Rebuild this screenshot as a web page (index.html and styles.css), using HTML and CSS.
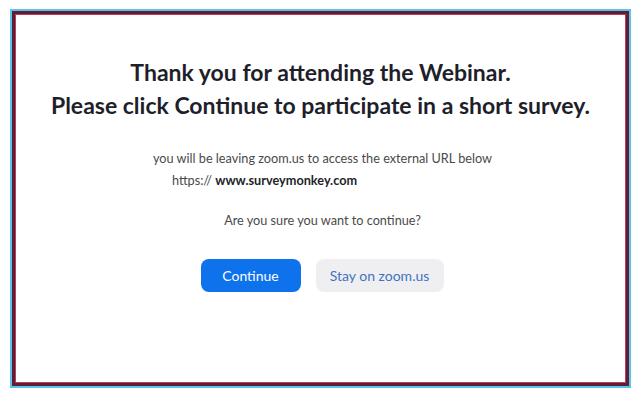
FILE: index.html
```html
<!DOCTYPE html>
<html>
<head>
<meta charset="utf-8">
<link rel="stylesheet" href="styles.css">
</head>
<body>
<div class="frame">
  <div class="dialog">
    <h1 class="title">Thank you for attending the Webinar.<br>Please click Continue to participate in a short survey.</h1>
    <div class="info">
      <p class="leave">you will be leaving zoom.us to access the external URL below</p>
      <p class="url">https:// <b>www.surveymonkey.com</b></p>
    </div>
    <p class="question">Are you sure you want to continue?</p>
    <div class="actions">
      <button class="btn primary">Continue</button>
      <button class="btn secondary">Stay on zoom.us</button>
    </div>
  </div>
</div>
</body>
</html>
```
FILE: styles.css
```css
html, body {
  margin: 0;
  padding: 0;
  background: #ffffff;
}
body {
  font-family: Lato, "Open Sans", sans-serif;
  padding: 9px 0 0 10px;
}
.frame {
  width: 621px;
  height: 379px;
  box-sizing: border-box;
  border: 2px solid #5cc4ec;
}
.dialog {
  height: 100%;
  box-sizing: border-box;
  border: 3px solid #5a2035;
  box-shadow: inset 0 0 0 1px #c23a55;
  display: flex;
  flex-direction: column;
  align-items: center;
  padding-top: 42px;
}
.title {
  margin: 0;
  font-size: 23px;
  line-height: 33px;
  font-weight: 700;
  color: #1e1f2a;
  text-align: center;
}
.info {
  margin-top: 25px;
  padding-left: 4px;
  font-size: 12.7px;
  color: #4a4a4a;
}
.info p {
  margin: 0;
}
.leave {
  line-height: 23px;
}
.url {
  line-height: 21px;
  padding-left: 19px;
}
.url b {
  color: #1e1f2a;
}
.question {
  margin: 19px 0 0;
  padding-left: 4px;
  font-size: 12.7px;
  line-height: 20px;
  color: #4a4a4a;
}
.actions {
  display: flex;
  gap: 15px;
  margin-top: 29px;
  padding-left: 3px;
}
.btn {
  font-family: Lato, "Open Sans", sans-serif;
  font-size: 14px;
  height: 33px;
  border: none;
  border-radius: 8px;
  padding: 0;
}
.primary {
  width: 100px;
  background: #0e72ed;
  color: #ffffff;
}
.secondary {
  width: 128px;
  background: #efeff2;
  color: #3f73c0;
}
```
